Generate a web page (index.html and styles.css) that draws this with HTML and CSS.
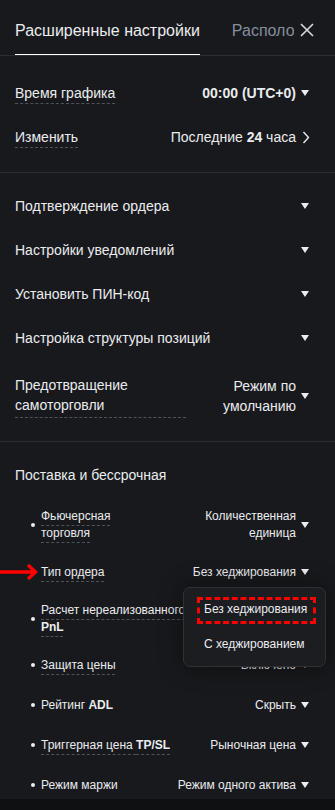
FILE: index.html
```html
<!DOCTYPE html>
<html lang="ru">
<head>
    <meta charset="UTF-8">
    <meta name="viewport" content="width=device-width, initial-scale=1.0">
    <title>Расширенные настройки</title>
    <link rel="stylesheet" href="styles.css">
</head>
<body>
    <div class="panel">
        <div class="header">
            <div class="tabs">
                <div class="tab active">Расширенные настройки</div>
                <div class="tab">Расположение</div>
            </div>
            <div class="close">
                <svg width="14" height="14" viewBox="0 0 14 14"><path d="M1 1L13 13M13 1L1 13" stroke="currentColor" stroke-width="1.6" fill="none"/></svg>
            </div>
        </div>

        <div class="section first">
            <div class="row">
                <span class="label dashed">Время графика</span>
                <span class="value"><b>00:00 (UTC+0)</b><i class="caret"></i></span>
            </div>
            <div class="row">
                <span class="label dashed">Изменить</span>
                <span class="value"><span>Последние <b>24</b> часа</span>
                    <svg class="chevron" width="8" height="13" viewBox="0 0 8 13"><path d="M1.5 1l5 5.5-5 5.5" stroke="currentColor" stroke-width="1.4" fill="none"/></svg>
                </span>
            </div>
        </div>

        <div class="section second">
            <div class="row">
                <span class="label">Подтверждение ордера</span>
                <span class="value"><i class="caret"></i></span>
            </div>
            <div class="row">
                <span class="label">Настройки уведомлений</span>
                <span class="value"><i class="caret"></i></span>
            </div>
            <div class="row">
                <span class="label">Установить ПИН-код</span>
                <span class="value"><i class="caret"></i></span>
            </div>
            <div class="row">
                <span class="label">Настройка структуры позиций</span>
                <span class="value"><i class="caret"></i></span>
            </div>
            <div class="row tall">
                <span class="label boxed">Предотвращение<br>самоторговли</span>
                <span class="value"><span class="two">Режим по<br>умолчанию</span><i class="caret"></i></span>
            </div>
        </div>

        <div class="section third">
            <div class="section-title">Поставка и бессрочная</div>

            <div class="sub-row">
                <span class="label"><span class="dashed">Фьючерсная<br>торговля</span></span>
                <span class="value"><span class="two">Количественная<br>единица</span><i class="caret"></i></span>
            </div>
            <div class="sub-row marked">
                <svg class="arrow" width="40" height="18" viewBox="0 0 40 18"><path d="M0 9H35M28 2L35.5 9L28 16" stroke="#f00" stroke-width="3.4" fill="none"/></svg>
                <span class="label"><span class="dashed">Тип ордера</span></span>
                <span class="value">Без хеджирования<i class="caret"></i></span>
                <div class="menu">
                    <div class="menu-item">Без хеджирования</div>
                    <div class="menu-item">С хеджированием</div>
                    <div class="highlight"></div>
                </div>
            </div>
            <div class="sub-row">
                <span class="label"><span class="dashed">Расчет нереализованного<br><b>PnL</b></span></span>
                <span class="value">Последняя<i class="caret"></i></span>
            </div>
            <div class="sub-row">
                <span class="label"><span class="dashed">Защита цены</span></span>
                <span class="value">Включено<i class="caret"></i></span>
            </div>
            <div class="sub-row">
                <span class="label"><span>Рейтинг <b>ADL</b></span></span>
                <span class="value">Скрыть<i class="caret"></i></span>
            </div>
            <div class="sub-row">
                <span class="label"><span class="dashed">Триггерная цена <b>TP/SL</b></span></span>
                <span class="value">Рыночная цена<i class="caret"></i></span>
            </div>
            <div class="sub-row">
                <span class="label"><span>Режим маржи</span></span>
                <span class="value">Режим одного актива<i class="caret"></i></span>
            </div>
        </div>
    </div>
</body>
</html>
```

FILE: styles.css
```css
body {
    margin: 0;
    background: #0f1012;
    color: #eaecef;
    font-family: "Liberation Sans", Arial, sans-serif;
}
.panel {
    background: #18191c;
    width: 335px;
    height: 799px;
    overflow: hidden;
}
.header {
    display: flex;
    align-items: center;
    height: 56px;
    box-sizing: border-box;
    border-bottom: 1px solid #2b2e33;
    padding: 0 21px 0 15px;
}
.tabs {
    display: flex;
    flex: 1;
    overflow: hidden;
    white-space: nowrap;
    gap: 32px;
    align-self: flex-start;
}
.tab {
    font-size: 16px;
    line-height: 20px;
    height: 56px;
    box-sizing: border-box;
    padding-top: 21px;
    color: #848e9c;
    margin-bottom: -1px;
}
.tab.active {
    color: #eaecef;
    border-bottom: 2px solid #ffffff;
}
.close {
    color: #d8dadf;
    display: flex;
    margin-left: 6px;
    margin-top: 4px;
}
.section {
    border-bottom: 1px solid #2b2e33;
    padding: 0 26px 0 15px;
}
.section.first {
    padding-top: 15px;
    padding-bottom: 13px;
}
.section.second {
    padding-top: 11px;
    padding-bottom: 14px;
}
.section.third {
    border-bottom: none;
    padding-top: 23px;
    padding-bottom: 0;
}
.row {
    display: flex;
    justify-content: space-between;
    align-items: center;
    min-height: 44px;
    font-size: 14px;
    line-height: 20px;
}
.row.tall {
    padding: 14px 0 9px;
}
.label b, .value b {
    font-weight: 700;
}
.dashed {
    text-decoration: underline dashed #4d525b;
    text-decoration-thickness: 1px;
    text-underline-offset: 5px;
}
.boxed {
    display: block;
    width: 171px;
    border-bottom: 1px dashed #4d525b;
    padding-bottom: 2px;
}
.value {
    display: flex;
    align-items: center;
    text-align: right;
    white-space: nowrap;
}
.value .two {
    display: block;
}
.caret {
    display: inline-block;
    width: 0;
    height: 0;
    border-left: 4.5px solid transparent;
    border-right: 4.5px solid transparent;
    border-top: 6px solid #eaecef;
    margin-left: 5px;
}
.chevron {
    margin-left: 6px;
    margin-right: -1px;
}
.section-title {
    font-size: 14px;
    line-height: 20px;
    margin-bottom: 14px;
}
.sub-row {
    position: relative;
    display: flex;
    justify-content: space-between;
    align-items: center;
    min-height: 40px;
    padding: 9px 0 9px 26px;
    box-sizing: border-box;
    font-size: 12px;
    line-height: 17px;
}
.sub-row.marked {
    min-height: 42px;
}
.sub-row .label {
    display: flex;
    align-items: center;
}
.sub-row .label::before {
    content: "";
    width: 4px;
    height: 4px;
    border-radius: 50%;
    background: #eaecef;
    margin-left: -10px;
    margin-right: 6px;
    flex-shrink: 0;
}
.arrow {
    position: absolute;
    left: -15px;
    top: 12px;
}
.menu {
    position: absolute;
    top: 36px;
    right: -17px;
    width: 143px;
    box-sizing: border-box;
    padding: 4px 0;
    background: #1c1d20;
    border: 1px solid #2e3136;
    border-radius: 7px;
    box-shadow: 0 0 24px rgba(0, 0, 0, 0.45);
    z-index: 2;
}
.menu-item {
    line-height: 35px;
    padding-left: 20px;
    font-size: 12px;
    color: #eaecef;
}
.highlight {
    position: absolute;
    left: 13px;
    top: 9px;
    width: 119px;
    height: 27px;
    box-sizing: border-box;
    border: 3px dashed #f00;
}
```
